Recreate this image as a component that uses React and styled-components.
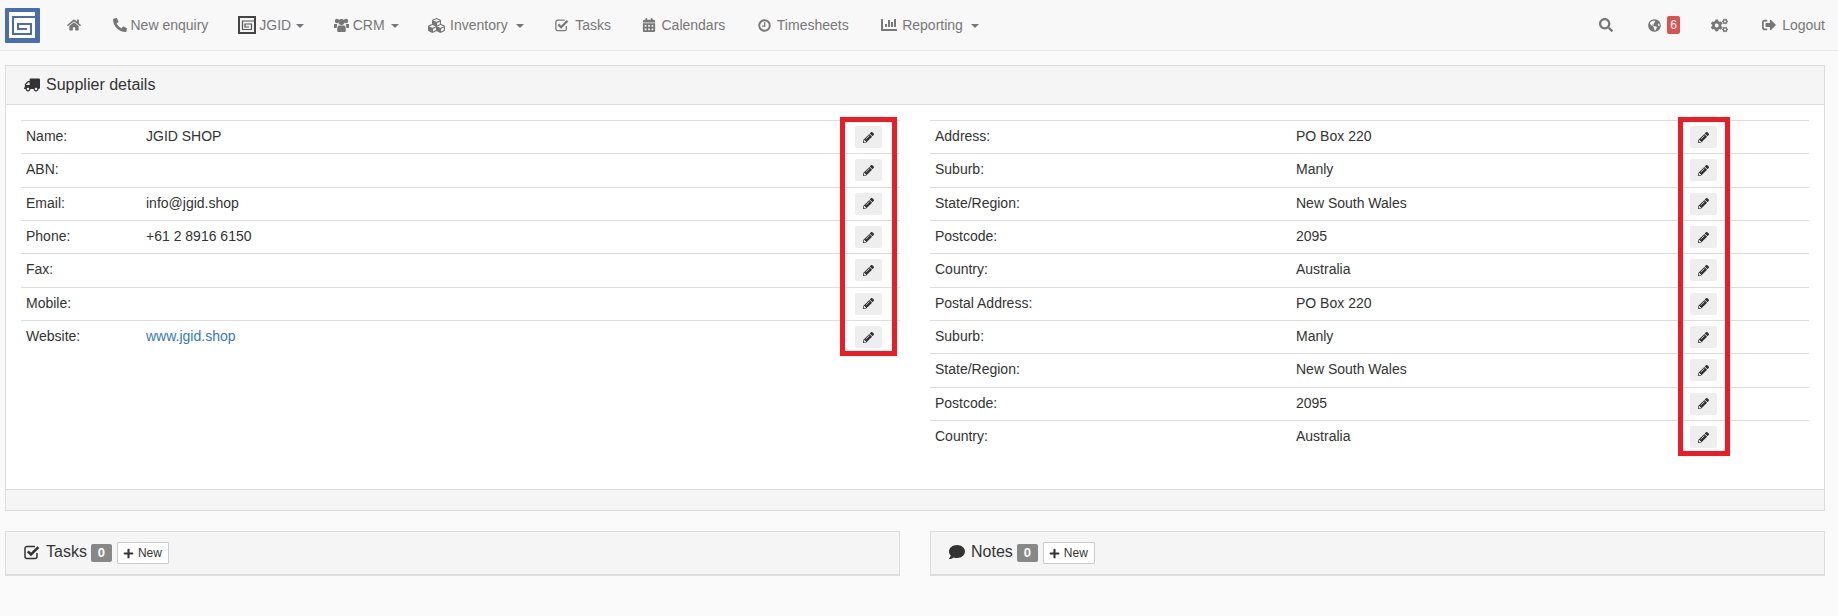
import styled, { createGlobalStyle } from "styled-components";
import {
  FaChartBar, FaCalendarAlt, FaCogs, FaComment, FaCubes, FaGlobeAmericas, FaHome,
  FaPencilAlt, FaPhoneAlt, FaPlus, FaSearch, FaSignOutAlt, FaTruck,
} from "react-icons/fa";

const GlobalStyle = createGlobalStyle`
  html, body { margin: 0; padding: 0; }
  body {
    background: #fafafa;
    font-family: "Liberation Sans", Arial, sans-serif;
    font-size: 14px;
    color: #333;
    min-height: 616px;
  }
`;

const Navbar = styled.nav`
  display: flex;
  align-items: center;
  height: 50px;
  padding-left: 5px;
  background: #f8f8f8;
  border-bottom: 1px solid #e7e7e7;
  color: #777;
  font-size: 14px;
`;

const Brand = styled.svg`
  width: 35px;
  height: 35px;
  margin-right: 27px;
  flex: none;
`;

const NavGroup = styled.div`
  display: flex;
  align-items: center;
  gap: ${({ $gap }) => $gap}px;
  margin-left: ${({ $push }) => ($push ? "auto" : "0")};
  padding-right: ${({ $push }) => ($push ? "13px" : "0")};
`;

const NavLink = styled.a`
  display: flex;
  align-items: center;
  gap: ${({ $gap }) => $gap || 4}px;
  margin-left: ${({ $nudge }) => $nudge || 0}px;
  white-space: nowrap;
  svg { flex: none; }
`;

const Caret = styled.span`
  width: 0;
  height: 0;
  margin-left: ${({ $tight }) => ($tight ? 2 : 3)}px;
  margin-top: 2px;
  border-top: 4px solid #777;
  border-left: 4px solid transparent;
  border-right: 4px solid transparent;
`;

const Badge = styled.span`
  display: inline-block;
  background: ${({ $red }) => ($red ? "#d9534f" : "#888")};
  color: #fff;
  border-radius: 2px;
  text-align: center;
  font-size: ${({ $red }) => ($red ? "12px" : "13px")};
  font-weight: ${({ $red }) => ($red ? 400 : 700)};
  line-height: 18px;
  width: ${({ $red }) => ($red ? "13px" : "21px")};
`;

const Page = styled.main`
  padding: 14px 13px 0 5px;
`;

const Panel = styled.section`
  background: #fff;
  border: 1px solid #ddd;
`;

const PanelHeading = styled.header`
  display: flex;
  align-items: center;
  gap: 6px;
  height: 38px;
  padding-left: 18px;
  background: #f5f5f5;
  border-bottom: 1px solid #ddd;
  font-size: 16px;
  color: #333;
  svg { transform: scaleX(-1); }
`;

const PanelBody = styled.div`
  display: grid;
  grid-template-columns: 879px 879px;
  column-gap: 30px;
  padding: 15px 15px 0;
  height: 384px;
  box-sizing: border-box;
`;

const PanelFooter = styled.footer`
  height: 20px;
  background: #f5f5f5;
  border-top: 1px solid #ddd;
`;

const DetailTable = styled.div`
  position: relative;
`;

const Row = styled.div`
  display: grid;
  grid-template-columns: ${({ $label }) => $label}px ${({ $value }) => $value}px 27px;
  align-items: center;
  height: 33.33px;
  box-sizing: border-box;
  padding-left: 5px;
  border-top: 1px solid #ddd;
`;

const Label = styled.span`
  margin-bottom: 2px;
`;

const Value = styled.span`
  margin-bottom: 2px;
  color: ${({ $link }) => ($link ? "#337ab7" : "#333")};
`;

const EditButton = styled.button`
  display: flex;
  align-items: center;
  justify-content: center;
  width: 27px;
  height: 22px;
  padding: 0;
  background: #eee;
  border: 0;
  border-radius: 2px;
  color: #333;
  svg { width: 11px; height: 11px; }
`;

const Highlight = styled.div`
  position: absolute;
  top: -3px;
  left: ${({ $left }) => $left}px;
  width: ${({ $width }) => $width}px;
  height: ${({ $height }) => $height}px;
  box-sizing: border-box;
  border: 5px solid #ed1c24;
  pointer-events: none;
`;

const BottomRow = styled.div`
  display: grid;
  grid-template-columns: 1fr 1fr;
  column-gap: 30px;
  margin-top: 20px;
`;

const SmallPanel = styled.section`
  display: flex;
  align-items: center;
  height: 45px;
  box-sizing: border-box;
  padding-left: 18px;
  background: #f5f5f5;
  border: 1px solid #ddd;
  border-bottom-width: 2px;
`;

const SmallTitle = styled.h3`
  display: flex;
  align-items: center;
  gap: 6px;
  margin: 0 4px 3px 0;
  font-size: 16px;
  font-weight: 400;
  color: #333;
  svg { width: 16px; height: 16px; }
`;

const NewButton = styled.button`
  display: flex;
  align-items: center;
  gap: 4px;
  height: 22px;
  margin-left: 5px;
  padding: 0 6px 0 5px;
  background: #fff;
  border: 1px solid #ccc;
  border-radius: 1px;
  color: #333;
  font-family: inherit;
  font-size: 12px;
  svg { width: 11px; height: 11px; }
`;

const leftRows = [
  ["Name:", "JGID SHOP"],
  ["ABN:", ""],
  ["Email:", "info@jgid.shop"],
  ["Phone:", "+61 2 8916 6150"],
  ["Fax:", ""],
  ["Mobile:", ""],
  ["Website:", "www.jgid.shop", true],
];

const rightRows = [
  ["Address:", "PO Box 220"],
  ["Suburb:", "Manly"],
  ["State/Region:", "New South Wales"],
  ["Postcode:", "2095"],
  ["Country:", "Australia"],
  ["Postal Address:", "PO Box 220"],
  ["Suburb:", "Manly"],
  ["State/Region:", "New South Wales"],
  ["Postcode:", "2095"],
  ["Country:", "Australia"],
];

function BrandMark() {
  return (
    <>
      <rect width="35" height="35" rx="1" fill="#4a6ea9" />
      <rect x="4" y="4" width="26" height="26" fill="#fff" />
      <path d="M30 9H8V26H26V16H13V21H22" fill="none" stroke="#4a6ea9" strokeWidth="2" />
    </>
  );
}

function JgidMark() {
  return (
    <svg width="18" height="18" viewBox="0 0 18 18">
      <rect width="18" height="18" fill="#444" />
      <rect x="2" y="2" width="14" height="14" fill="#f4f4f4" />
      <path d="M16 5H4.500V13.500H13.500V8H7V11H11" fill="none" stroke="#555" strokeWidth="1.2" />
    </svg>
  );
}

// font-awesome 4 style icons, the ones in the package are too thin
function CheckSquare({ size }) {
  return (
    <svg width={size} height={size} viewBox="0 0 16 16">
      <path d="M13 9v3.5a2 2 0 0 1-2 2H3a2 2 0 0 1-2-2v-8a2 2 0 0 1 2-2h8" fill="none" stroke="currentColor" strokeWidth="1.5" />
      <path d="M3.8 7.3 7 10.5 14.4 3.1" fill="none" stroke="currentColor" strokeWidth="2.6" />
    </svg>
  );
}

function ClockIcon({ size }) {
  return (
    <svg width={size} height={size} viewBox="0 0 14 14">
      <circle cx="7" cy="7" r="5.7" fill="none" stroke="currentColor" strokeWidth="2" />
      <path d="M7.2 3.6V7.6H4.4" fill="none" stroke="currentColor" strokeWidth="1.4" />
    </svg>
  );
}

function UsersIcon() {
  return (
    <svg width="15" height="14" viewBox="0 0 15 14" fill="currentColor">
      <circle cx="3" cy="3" r="2.2" />
      <circle cx="12" cy="3" r="2.2" />
      <circle cx="7.5" cy="4" r="3" />
      <path d="M0 6h3.2L2.6 10H0zM15 6h-3.2l.6 4H15z" />
      <path d="M3.8 8.2C4.5 7.5 5.2 7.6 7.500 7.600s3-.1 3.700.600c.5.600.6 3 .6 4.200 0 1-.6 1.600-1.500 1.600H4.700c-.9 0-1.500-.6-1.500-1.600 0-1.200.1-3.600.6-4.200z" />
    </svg>
  );
}

function Details({ rows, label, value }) {
  return rows.map(([name, text, link], i) => (
    <Row key={i} $label={label} $value={value}>
      <Label>{name}</Label>
      <Value $link={link}>{text}</Value>
      <EditButton><FaPencilAlt /></EditButton>
    </Row>
  ));
}

export default function App() {
  return (
    <>
      <GlobalStyle />
      <Navbar>
        <Brand viewBox="0 0 35 35"><BrandMark /></Brand>
        <NavGroup $gap={31.5}>
          <NavLink><FaHome size={14} /></NavLink>
          <NavLink><FaPhoneAlt size={14} />New enquiry</NavLink>
          <NavLink $gap={3} $nudge={-1.5}><JgidMark />JGID<Caret $tight /></NavLink>
          <NavLink $nudge={-2}><UsersIcon />CRM<Caret $tight /></NavLink>
          <NavLink $gap={5} $nudge={-2}><FaCubes size={17} />Inventory<Caret /></NavLink>
          <NavLink $gap={6}><CheckSquare size={14} />Tasks</NavLink>
          <NavLink $gap={6} $nudge={-1}><FaCalendarAlt size={14} />Calendars</NavLink>
          <NavLink $gap={6} $nudge={1}><ClockIcon size={13} />Timesheets</NavLink>
          <NavLink $gap={5} $nudge={1}><FaChartBar size={16} />Reporting<Caret /></NavLink>
        </NavGroup>
        <NavGroup $push $gap={33}>
          <NavLink><FaSearch size={14} /></NavLink>
          <NavLink $gap={6} $nudge={2}><FaGlobeAmericas size={13} /><Badge $red>6</Badge></NavLink>
          <NavLink $nudge={-2}><FaCogs size={17} /></NavLink>
          <NavLink $gap={6} $nudge={1}><FaSignOutAlt size={14} />Logout</NavLink>
        </NavGroup>
      </Navbar>
      <Page>
        <Panel>
          <PanelHeading><FaTruck size={16} />Supplier details</PanelHeading>
          <PanelBody>
            <DetailTable>
              <Details rows={leftRows} label={120} value={709} />
              <Highlight $left={819} $width={57} $height={239} />
            </DetailTable>
            <DetailTable>
              <Details rows={rightRows} label={361} value={394} />
              <Highlight $left={748} $width={52} $height={339} />
            </DetailTable>
          </PanelBody>
          <PanelFooter />
        </Panel>
        <BottomRow>
          <SmallPanel>
            <SmallTitle><CheckSquare size={16} />Tasks</SmallTitle>
            <Badge>0</Badge>
            <NewButton><FaPlus />New</NewButton>
          </SmallPanel>
          <SmallPanel>
            <SmallTitle><FaComment />Notes</SmallTitle>
            <Badge>0</Badge>
            <NewButton><FaPlus />New</NewButton>
          </SmallPanel>
        </BottomRow>
      </Page>
    </>
  );
}
